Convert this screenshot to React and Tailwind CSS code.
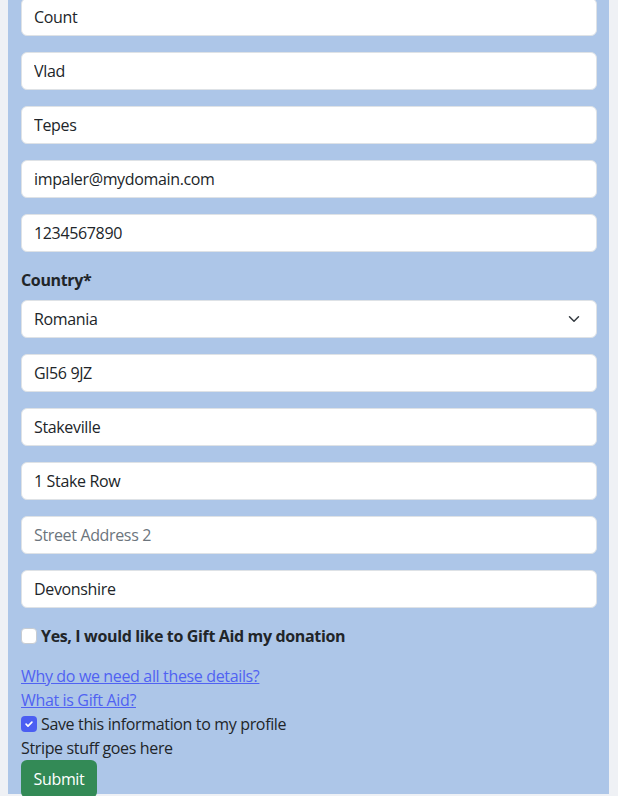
import React from "react";

const font = { fontFamily: '"Open Sans", "Noto Sans", sans-serif' };

function Field({ value, placeholder }) {
  return (
    <input
      readOnly
      value={value}
      placeholder={placeholder}
      className="block w-full h-[38px] rounded-[6px] border border-[#dee2e6] bg-white px-3 text-[16px] tracking-[-0.35px] text-[#212529] placeholder:text-[#6c757d] outline-none"
    />
  );
}

export default function App() {
  return (
    <div className="h-[796px] w-[618px] overflow-hidden bg-[#eff1f5] text-[#212529] tracking-[-0.35px]" style={font}>
      <div className="relative ml-2 w-[601px] h-full bg-[#adc6e8] pl-[13px] pr-[12px]">
        <div className="absolute left-0 top-0 h-[1px] w-[610px] bg-[#3b45f0] z-10" />
        <div className="-mt-[2px] flex flex-col">
          <div className="flex flex-col gap-4">
            <Field value="Count" />
            <Field value="Vlad" />
            <Field value="Tepes" />
            <Field value="impaler@mydomain.com" />
            <Field value="1234567890" />
          </div>
          <label className="mt-4 mb-2 block h-6 text-[16px] font-bold leading-6">Country*</label>
          <div className="relative flex h-[38px] items-center rounded-[6px] border border-[#dee2e6] bg-white px-3 text-[16px]">
            <span>Romania</span>
            <svg className="absolute right-[15px] top-[12px]" width="14" height="12" viewBox="0 0 16 16" fill="none">
              <path d="M2 5l6 6 6-6" stroke="#343a40" strokeWidth="2" strokeLinecap="round" strokeLinejoin="round" />
            </svg>
          </div>
          <div className="mt-4 flex flex-col gap-4">
            <Field value="Gl56 9JZ" />
            <Field value="Stakeville" />
            <Field value="1 Stake Row" />
            <Field value="" placeholder="Street Address 2" />
            <Field value="Devonshire" />
          </div>
          <div className="mt-4 flex h-6 items-center">
            <span className="h-4 w-4 rounded-[4px] border border-[#c7ccd2] bg-white" />
            <span className="ml-1 text-[16px] font-bold">Yes, I would like to Gift Aid my donation</span>
          </div>
          <div className="mt-4 flex flex-col text-[16px] leading-6">
            <a className="self-start text-[#5062f2] underline">Why do we need all these details?</a>
            <a className="self-start text-[#5062f2] underline">What is Gift Aid?</a>
            <div className="flex h-6 items-center">
              <span className="flex h-4 w-4 items-center justify-center rounded-[4px] bg-[#4b5ef2]">
                <svg width="10" height="10" viewBox="0 0 12 12" fill="none">
                  <path d="M2.5 6.2l2.3 2.3L9.5 3.8" stroke="white" strokeWidth="2" strokeLinecap="round" strokeLinejoin="round" />
                </svg>
              </span>
              <span className="ml-1">Save this information to my profile</span>
            </div>
            <div>Stripe stuff goes here</div>
          </div>
          <button className="self-start h-[38px] w-[76px] rounded-[6px] bg-[#338a56] text-[16px] text-white">Submit</button>
        </div>
      </div>
    </div>
  );
}
